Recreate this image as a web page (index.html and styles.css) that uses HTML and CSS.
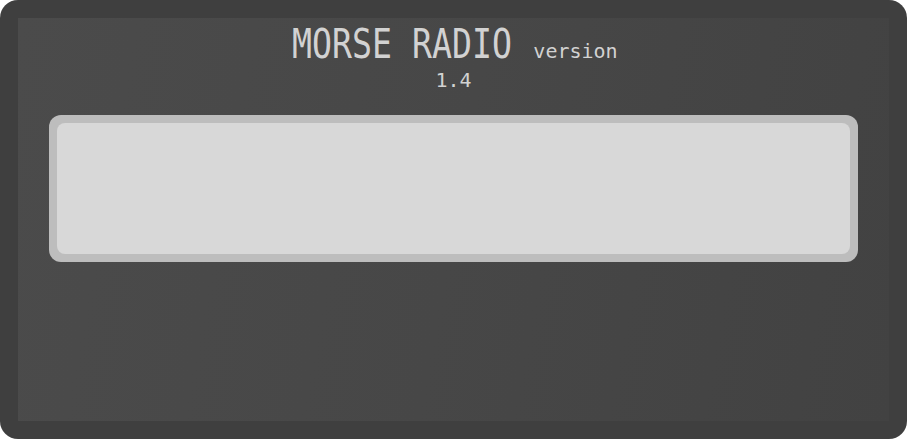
FILE: index.html
```html
<!DOCTYPE html>
<html>
<head>
<meta charset="utf-8">
<link rel="stylesheet" href="styles.css">
</head>
<body>
<div class="frame">
  <div class="panel">
    <div class="header">
      <div class="title-row"><span class="title">MORSE RADIO</span><span class="version">version</span></div>
      <div class="number">1.4</div>
    </div>
    <div class="display"><div class="screen"></div></div>
  </div>
</div>
</body>
</html>
```
FILE: styles.css
```css
html, body { margin: 0; padding: 0; background: #ffffff; }
.frame {
  width: 907px; height: 439px; box-sizing: border-box;
  background: #3f3f3f; border-radius: 18px; padding: 18px;
}
.panel {
  height: 100%;
  background: linear-gradient(100deg, #4b4b4b 0%, #474747 50%, #424242 100%);
  display: flex; flex-direction: column;
  padding: 0 31px; box-sizing: border-box;
  font-family: "DejaVu Sans Mono", monospace;
  color: #d2d2d2;
}
.header { display: flex; flex-direction: column; align-items: center; height: 97px; }
.title-row { display: flex; align-items: baseline; gap: 22px; height: 48px; margin-top: 2px; margin-left: 3px; }
.title { display: inline-block; font-size: 40px; transform: scaleX(0.83); width: 219px; transform-origin: left; white-space: nowrap; line-height: 48px; }
.version { font-size: 20px; }
.number { font-size: 20px; line-height: 24px; }
.display {
  height: 147px; box-sizing: border-box;
  background: #bdbdbd; border-radius: 12px; padding: 8px;
}
.screen { height: 100%; background: #d8d8d8; border-radius: 8px; }
```
